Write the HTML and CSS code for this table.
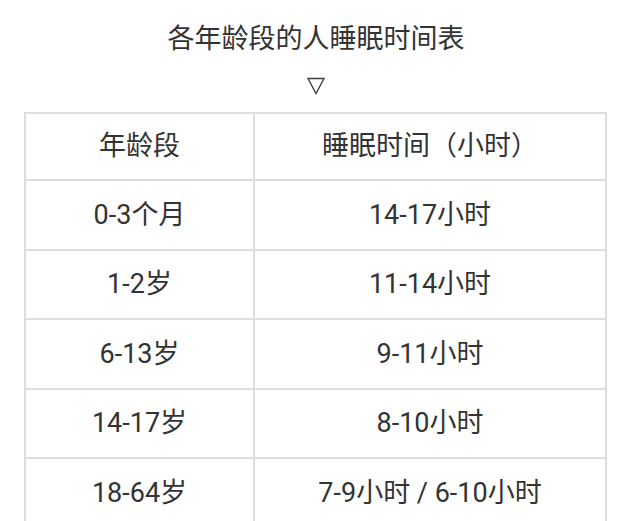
FILE: index.html
```html
<!DOCTYPE html>
<html lang="zh-CN">
<head>
<meta charset="utf-8">
<title>各年龄段的人睡眠时间表</title>
<link rel="stylesheet" href="styles.css">
</head>
<body>
  <h1 class="title">各年龄段的人睡眠时间表</h1>
  <div class="arrow">
    <svg width="18" height="18" viewBox="0 0 18 18" aria-hidden="true">
      <polygon points="1,1.5 17,1.5 9,16.5" fill="none" stroke="#3a3a3a" stroke-width="1.3" stroke-linejoin="miter"/>
    </svg>
  </div>
  <div class="table">
    <div class="cell head">年龄段</div>
    <div class="cell head">睡眠时间（小时）</div>
    <div class="cell r1">0-3个月</div>
    <div class="cell r1">14-17小时</div>
    <div class="cell r2">1-2岁</div>
    <div class="cell r2">11-14小时</div>
    <div class="cell r1">6-13岁</div>
    <div class="cell r1">9-11小时</div>
    <div class="cell r2">14-17岁</div>
    <div class="cell r2">8-10小时</div>
    <div class="cell r1">18-64岁</div>
    <div class="cell r1">7-9小时 / 6-10小时</div>
  </div>
</body>
</html>
```

FILE: styles.css
```css
html, body {
  margin: 0;
  padding: 0;
  background: #ffffff;
}

body {
  font-family: Roboto, "Noto Sans CJK SC", sans-serif;
  color: #333333;
  overflow: hidden;
}

.title {
  margin: 0;
  padding-top: 25px;
  font-size: 27px;
  line-height: 28px;
  font-weight: 400;
  text-align: center;
  color: #333333;
}

.arrow {
  display: flex;
  justify-content: center;
  margin-top: 24px;
  height: 18px;
  padding-right: 1px;
}

.arrow svg {
  display: block;
}

.table {
  margin-top: 17px;
  margin-left: 24px;
  width: 583px;
  box-sizing: border-box;
  display: grid;
  grid-template-columns: 227px 1fr;
  grid-template-rows: 65px 68px 67px 68px 67px 68px;
  gap: 2px;
  padding: 2px;
  background: #dddddd;
}

.cell {
  background: #ffffff;
  display: flex;
  align-items: center;
  justify-content: center;
  font-size: 27px;
  line-height: 1;
  color: #333333;
}
```
